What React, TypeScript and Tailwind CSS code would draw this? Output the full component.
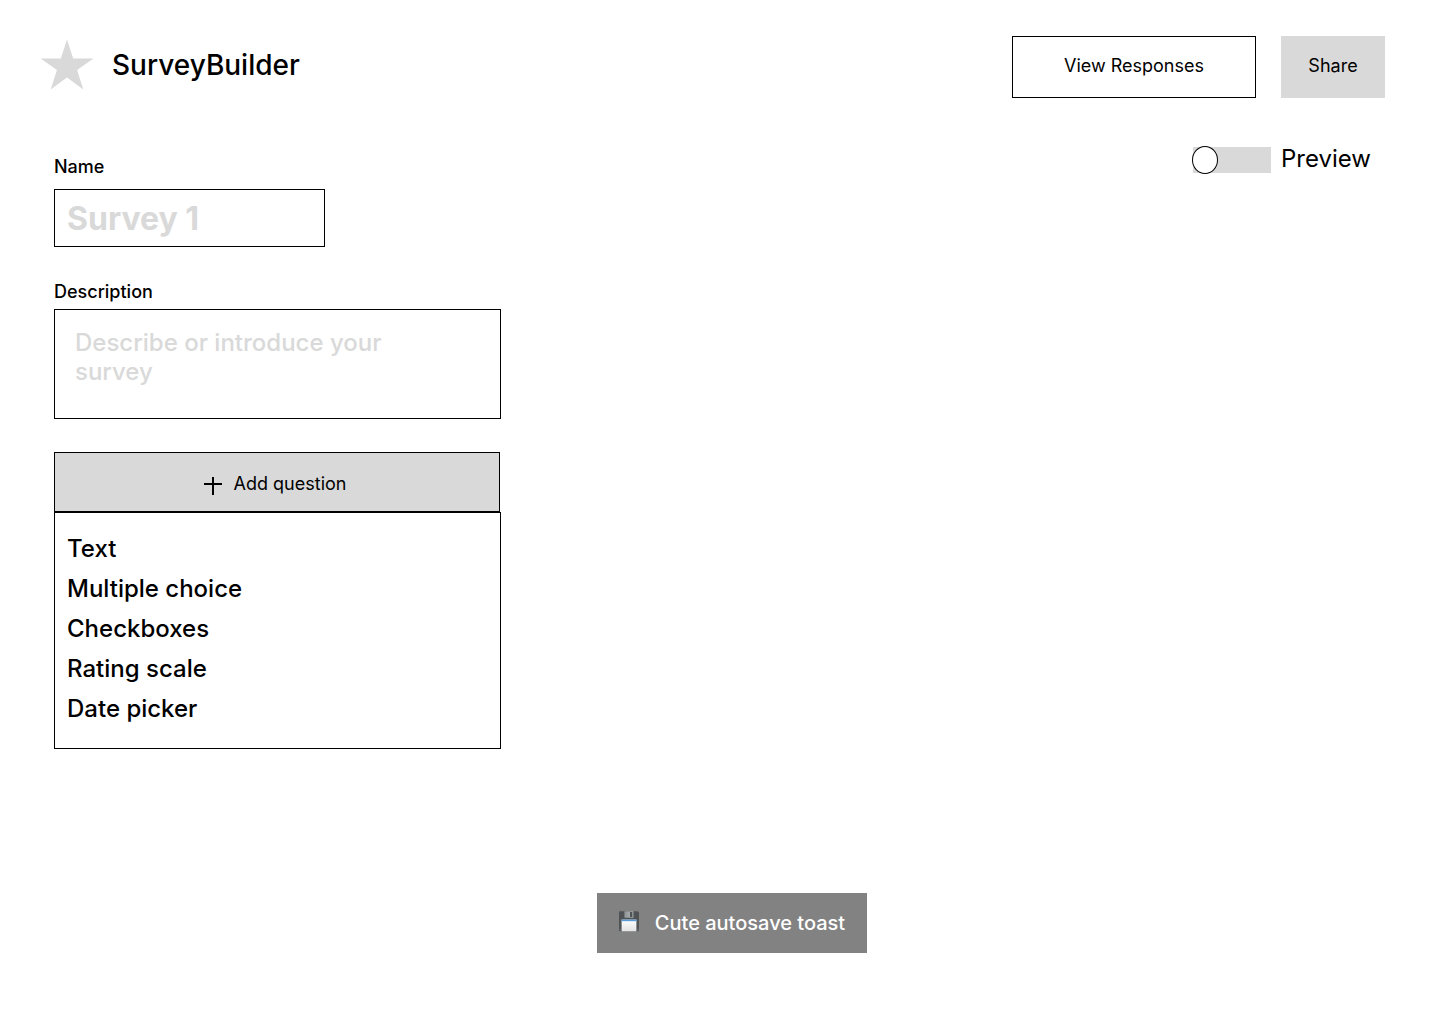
import { useState } from "react";

const questionTypes = ["Text", "Multiple choice", "Checkboxes", "Rating scale", "Date picker"];

function StarLogo() {
  return (
    <svg width="54" height="52" viewBox="0 0 54 52" aria-hidden="true" className="shrink-0">
      <path
        d="M27 0.5L33.2 19.4H53.4L37.1 31.1L43.3 50.6L27 38.6L10.7 50.6L16.9 31.1L0.6 19.4H20.8Z"
        fill="#d9d9d9"
      />
    </svg>
  );
}

function PlusIcon() {
  return (
    <svg width="18" height="18" viewBox="0 0 18 18" aria-hidden="true" className="mt-1 shrink-0">
      <path d="M0 7H18M9 0V18" stroke="#000" strokeWidth="2" fill="none" />
    </svg>
  );
}

function FloppyIcon() {
  return (
    <svg width="20" height="21" viewBox="0 0 20 21" aria-hidden="true" className="mb-1 shrink-0">
      <defs>
        <linearGradient id="shutter" x1="0" x2="1" y1="0" y2="0">
          <stop offset="0" stopColor="#8f9596" />
          <stop offset="1" stopColor="#b4b9ba" />
        </linearGradient>
        <linearGradient id="paper" x1="0" x2="0" y1="0" y2="1">
          <stop offset="0" stopColor="#ffffff" />
          <stop offset="1" stopColor="#e2e2e4" />
        </linearGradient>
      </defs>
      <path d="M0.6 0.3H18.6L20 1.6V20.3H0.6L0 19.8V0.8Z" fill="#505356" />
      <rect x="5.4" y="0.3" width="9" height="6.4" fill="url(#shutter)" />
      <rect x="11" y="1" width="2.4" height="5" fill="#505356" />
      <rect x="2.6" y="8.6" width="14.8" height="11.7" fill="url(#paper)" />
      <rect x="2.6" y="8.6" width="14.8" height="1.6" fill="#5b9bd8" />
      <rect x="0.6" y="18" width="1" height="1.4" fill="#73777a" />
      <rect x="18.4" y="18" width="1" height="1.4" fill="#73777a" />
    </svg>
  );
}

export default function App() {
  const [preview, setPreview] = useState(false);

  return (
    <div className="flex min-h-screen flex-col bg-white font-['Inter',sans-serif] text-black">
      <header className="flex items-start justify-between gap-6 pt-9 pr-[55px] pl-10">
        <div className="flex h-[58px] items-center gap-[18px]">
          <StarLogo />
          <h1 className="text-[28px] leading-[34px] font-medium">SurveyBuilder</h1>
        </div>
        <div className="flex gap-[25px]">
          <button
            type="button"
            className="h-[62px] w-[244px] border border-black bg-white pb-[3px] text-lg leading-[22px]"
          >
            View Responses
          </button>
          <button type="button" className="h-[62px] w-[104px] bg-[#d9d9d9] pb-[3px] text-lg leading-[22px]">
            Share
          </button>
        </div>
      </header>

      <main className="flex items-start justify-between gap-6 pr-[69px] pl-[54px]">
        <form className="mt-[58px] flex w-[447px] flex-col" onSubmit={(e) => e.preventDefault()}>
          <label htmlFor="name" className="text-lg leading-[22px] font-medium">
            Name
          </label>
          <input
            id="name"
            type="text"
            placeholder="Survey 1"
            className="mt-[11px] h-[58px] w-[271px] border border-black px-3 text-[32px] leading-[38px] font-bold outline-none placeholder:text-[#d9d9d9]"
          />

          <label htmlFor="description" className="mt-[34px] text-lg leading-[22px] font-medium">
            Description
          </label>
          <textarea
            id="description"
            placeholder="Describe or introduce your survey"
            className="mt-[6px] h-[110px] w-full resize-none border border-black pt-[18px] pr-20 pl-5 text-2xl leading-[29px] font-medium outline-none placeholder:text-[#d9d9d9]"
          />

          <button
            type="button"
            aria-expanded="true"
            className="mt-[33px] mr-px flex h-[60px] items-center justify-center gap-3 border border-black bg-[#d9d9d9] pt-1 pr-1 text-lg leading-[22px]"
          >
            <PlusIcon />
            Add question
          </button>
          <ul className="border border-black bg-white pt-[15px] pb-5">
            {questionTypes.map((type) => (
              <li key={type}>
                <button
                  type="button"
                  className="block h-10 w-full px-3 text-left text-2xl leading-[29px] font-medium"
                >
                  {type}
                </button>
              </li>
            ))}
          </ul>
        </form>

        <label className="mt-[46px] flex cursor-pointer items-center gap-[10px]">
          <span className="relative mt-[2px] h-[26px] w-[78px] bg-[#d9d9d9]">
            <input
              type="checkbox"
              role="switch"
              checked={preview}
              onChange={(e) => setPreview(e.target.checked)}
              className="peer absolute inset-0 h-full w-full cursor-pointer appearance-none"
            />
            <span className="pointer-events-none absolute -top-px -left-px h-7 w-[26px] rounded-[50%] border border-black bg-white peer-checked:right-0 peer-checked:left-auto" />
          </span>
          <span className="text-2xl leading-[29px]">Preview</span>
        </label>
      </main>

      <div className="mt-auto flex justify-center pt-12 pb-[71px] pl-6">
        <div
          role="status"
          className="flex h-[60px] items-center gap-4 bg-[#828282] px-[22px] text-xl leading-6 font-medium text-white"
        >
          <FloppyIcon />
          Cute autosave toast
        </div>
      </div>
    </div>
  );
}
